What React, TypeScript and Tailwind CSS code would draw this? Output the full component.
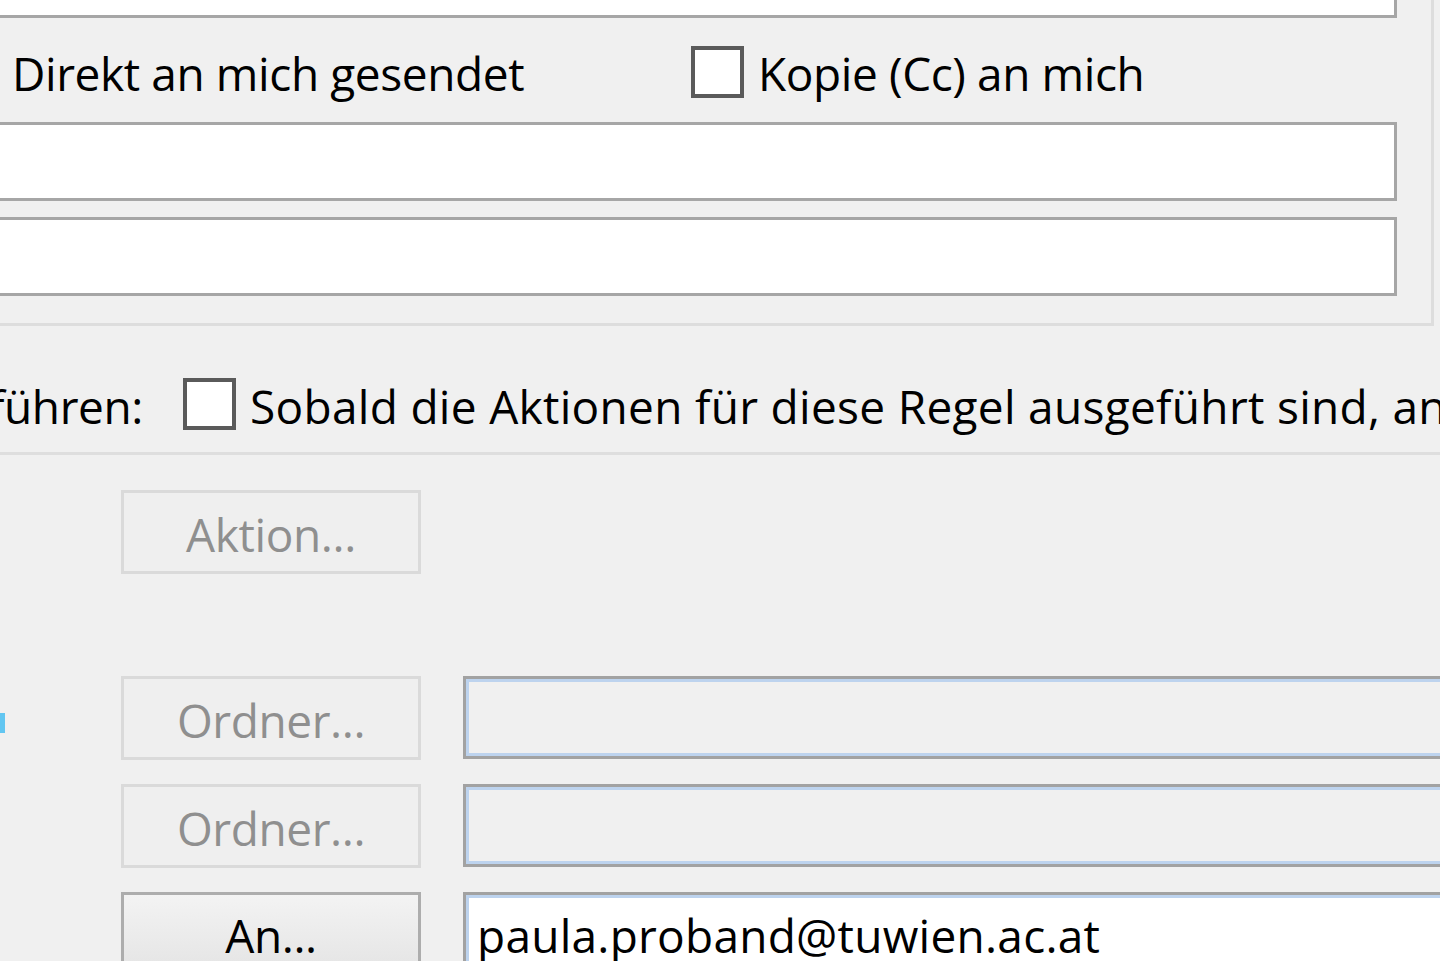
import React from 'react';

function Checkbox({ className = '' }: { className?: string }) {
  return <div className={`h-[52px] w-[53px] shrink-0 border-[4px] border-[#5a5a5a] bg-white ${className}`} />;
}

function WhiteField({ className = '' }: { className?: string }) {
  return <div className={`border-[3px] border-[#a6a6a6] bg-white ${className}`} />;
}

function DisabledButton({ label }: { label: string }) {
  return (
    <div className="flex h-[84px] w-[300px] shrink-0 items-center justify-center border-[3px] border-[#dadada] bg-[#efefef] pt-[4px] text-[#8f8f8f]">
      {label}
    </div>
  );
}

function PathField({ value, enabled = false }: { value?: string; enabled?: boolean }) {
  return (
    <div
      className={`ml-[42px] flex h-[83px] w-[1100px] shrink-0 items-center border-[3px] border-[#a2a2a2] pl-[11px] shadow-[inset_0_0_0_3px_#bdd3ee] ${
        enabled ? 'bg-white' : 'bg-[#f0f0f0]'
      }`}
    >
      {value && <span className="pt-[2px] tracking-[0.25px] text-black">{value}</span>}
    </div>
  );
}

export default function App() {
  return (
    <div className="h-[961px] w-[1440px] overflow-hidden bg-[#f0f0f0] font-['Open_Sans','Noto_Sans',sans-serif] text-[46px] leading-none tracking-[-0.4px] text-black">
      {/* Condition group box */}
      <div className="-mt-[60px] -ml-[40px] w-[1474px] border-r-[3px] border-b-[3px] border-[#dddddd] pr-[34px] pb-[27px] pl-[20px]">
        <WhiteField className="h-[78px]" />

        <div className="flex h-[104px] items-center pl-[32px]">
          <div className="w-[679px] shrink-0 whitespace-nowrap pt-[6px]">Direkt an mich gesendet</div>
          <Checkbox className="mt-[4px]" />
          <span className="ml-[14px] whitespace-nowrap pt-[6px]">Kopie (Cc) an mich</span>
        </div>

        <WhiteField className="h-[79px]" />
        <WhiteField className="mt-[16px] h-[79px]" />
      </div>

      {/* Stop processing option */}
      <div className="mt-[52px] flex h-[52px] items-center">
        <div className="flex w-[143px] shrink-0 justify-end whitespace-nowrap pt-[4px]">Folgendes ausführen:</div>
        <Checkbox className="ml-[40px]" />
        <span className="ml-[14px] whitespace-nowrap pt-[4px] tracking-[0.3px]">
          Sobald die Aktionen für diese Regel ausgeführt sind, an
        </span>
      </div>
      <div className="mt-[22px] h-[3px] bg-[#dedede]" />

      {/* Actions */}
      <div className="pl-[121px]">
        <div className="mt-[35px]">
          <DisabledButton label="Aktion..." />
        </div>

        <div className="relative mt-[102px] flex items-start">
          <div className="absolute top-[37px] -left-[121px] h-[20px] w-[5px] bg-[#62c6f1]" />
          <DisabledButton label="Ordner..." />
          <PathField />
        </div>

        <div className="mt-[24px] flex items-start">
          <DisabledButton label="Ordner..." />
          <PathField />
        </div>

        <div className="mt-[24px] flex items-start">
          <div className="flex h-[84px] w-[300px] shrink-0 items-center justify-center border-[3px] border-[#adadad] bg-gradient-to-b from-[#f3f3f3] to-[#e4e4e4] pt-[2px]">
            An...
          </div>
          <PathField value="paula.proband@tuwien.ac.at" enabled />
        </div>
      </div>
    </div>
  );
}
